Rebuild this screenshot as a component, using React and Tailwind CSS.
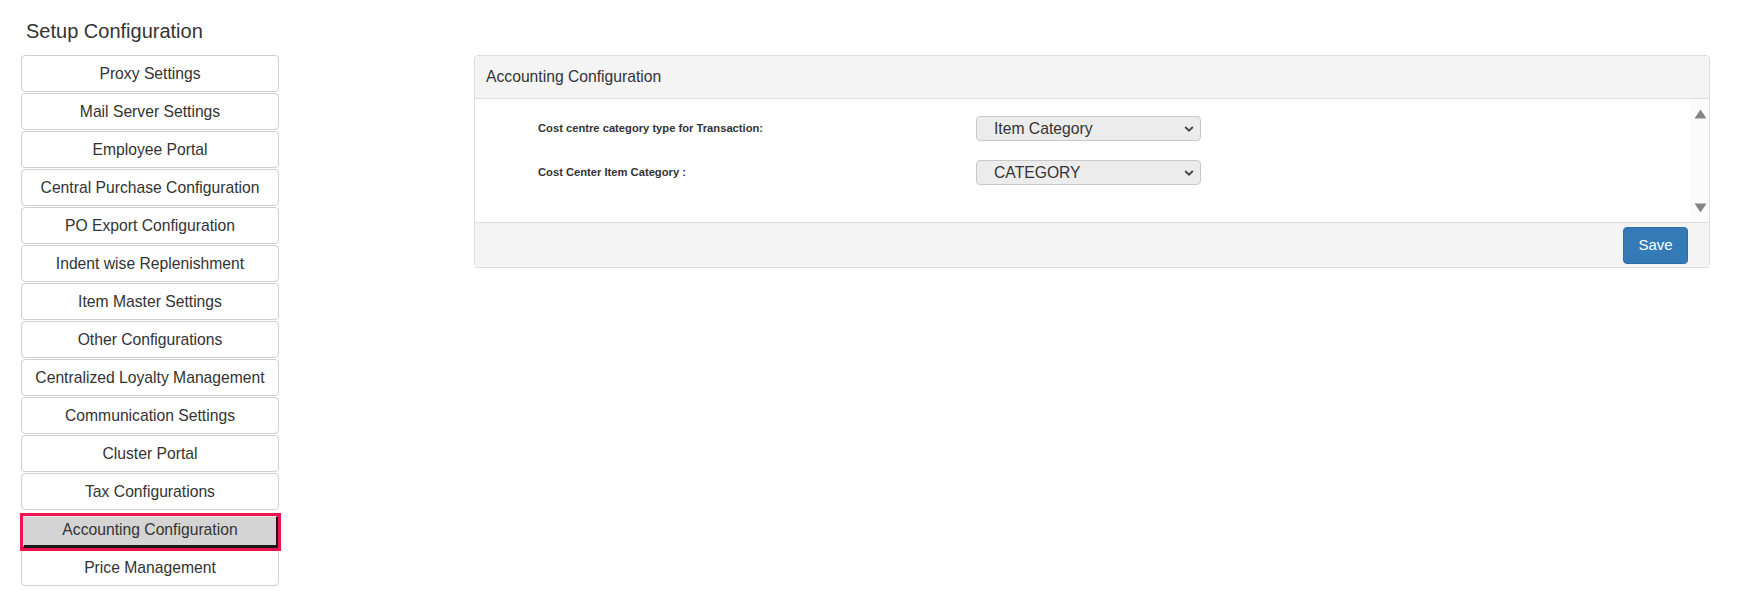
import React from "react";

const items = [
  "Proxy Settings",
  "Mail Server Settings",
  "Employee Portal",
  "Central Purchase Configuration",
  "PO Export Configuration",
  "Indent wise Replenishment",
  "Item Master Settings",
  "Other Configurations",
  "Centralized Loyalty Management",
  "Communication Settings",
  "Cluster Portal",
  "Tax Configurations",
  "Accounting Configuration",
  "Price Management",
];

function Chevron() {
  return (
    <svg width="10" height="7" viewBox="0 0 10 7" className="pointer-events-none absolute right-[7px] top-1/2 -translate-y-1/2">
      <path d="M1.2 1.5 L5 5.2 L8.8 1.5" fill="none" stroke="#444" strokeWidth="1.8" />
    </svg>
  );
}

function SelectBox({ value, options }) {
  return (
    <div className="relative w-[225px] h-[25px]">
      <select
        defaultValue={value}
        className="appearance-none w-full h-full rounded-[4px] border border-[#c9c9c9] bg-[#ececec] pl-[17px] text-[15.7px] text-[#333] outline-none"
      >
        {options.map((o) => (
          <option key={o} value={o}>
            {o}
          </option>
        ))}
      </select>
      <Chevron />
    </div>
  );
}

export default function App() {
  const active = "Accounting Configuration";
  return (
    <div className="w-[1744px] h-[612px] bg-white text-[#333] font-['Liberation_Sans',Arial,sans-serif] flex">
      {/* left menu */}
      <div className="w-[258px] ml-[21px] pt-[20px]">
        <h4 className="text-[20px] leading-[22px] pl-[5px] mb-[13px]">Setup Configuration</h4>
        <div className="flex flex-col gap-px">
          {items.map((it) =>
            it === active ? (
              <button
                key={it}
                className="mt-[5px] ml-[2px] mr-[1px] h-[32px] bg-[#d4d4d4] border-t border-l border-t-[#e2e2e2] border-l-[#e2e2e2] border-b-[3px] border-r-2 border-b-[#1a1a1a] border-r-[#1a1a1a] outline-[3.5px] outline-solid outline-[#f0134d] text-[15.7px] leading-none text-[#333] pb-[2px] relative z-10"
              >
                {it}
              </button>
            ) : (
              <button
                key={it}
                className="h-[37px] rounded-[4px] border border-[#cfcfcf] bg-white text-[15.7px] leading-none text-[#333]"
              >
                {it}
              </button>
            )
          )}
        </div>
      </div>

      {/* right panel */}
      <div className="ml-[195px] pt-[55px]">
        <div className="w-[1236px] rounded-[4px] border border-[#dddddd] overflow-hidden">
          <div className="h-[43px] bg-[#f4f4f4] border-b border-[#dddddd] flex items-center pl-[11px] text-[15.7px]">
            Accounting Configuration
          </div>
          <div className="flex h-[123px]">
            <div className="flex-1 pt-[17px] pl-[63px] flex flex-col gap-[19px]">
              <div className="flex items-center">
                <div className="w-[438px] text-[11.2px] font-bold">Cost centre category type for Transaction:</div>
                <SelectBox value="Item Category" options={["Item Category", "Item Group"]} />
              </div>
              <div className="flex items-center">
                <div className="w-[438px] text-[11.2px] font-bold">Cost Center Item Category :</div>
                <SelectBox value="CATEGORY" options={["CATEGORY", "SUB CATEGORY"]} />
              </div>
            </div>
            <div className="w-[18px] bg-[#fbfbfb] flex flex-col items-center justify-between pt-[10px] pb-[9px]">
              <svg width="13" height="10" viewBox="0 0 13 10">
                <path d="M6.5 0.5 L12.5 9.5 L0.5 9.5 Z" fill="#858585" />
              </svg>
              <svg width="13" height="10" viewBox="0 0 13 10">
                <path d="M0.5 0.5 L12.5 0.5 L6.5 9.5 Z" fill="#858585" />
              </svg>
            </div>
          </div>
          <div className="h-[45px] bg-[#f4f4f4] border-t border-[#dddddd] flex items-center justify-end pr-[21px]">
            <button className="w-[65px] h-[37px] rounded-[4px] bg-[#337ab7] border border-[#2e6da4] text-white text-[15px]">
              Save
            </button>
          </div>
        </div>
      </div>
    </div>
  );
}
